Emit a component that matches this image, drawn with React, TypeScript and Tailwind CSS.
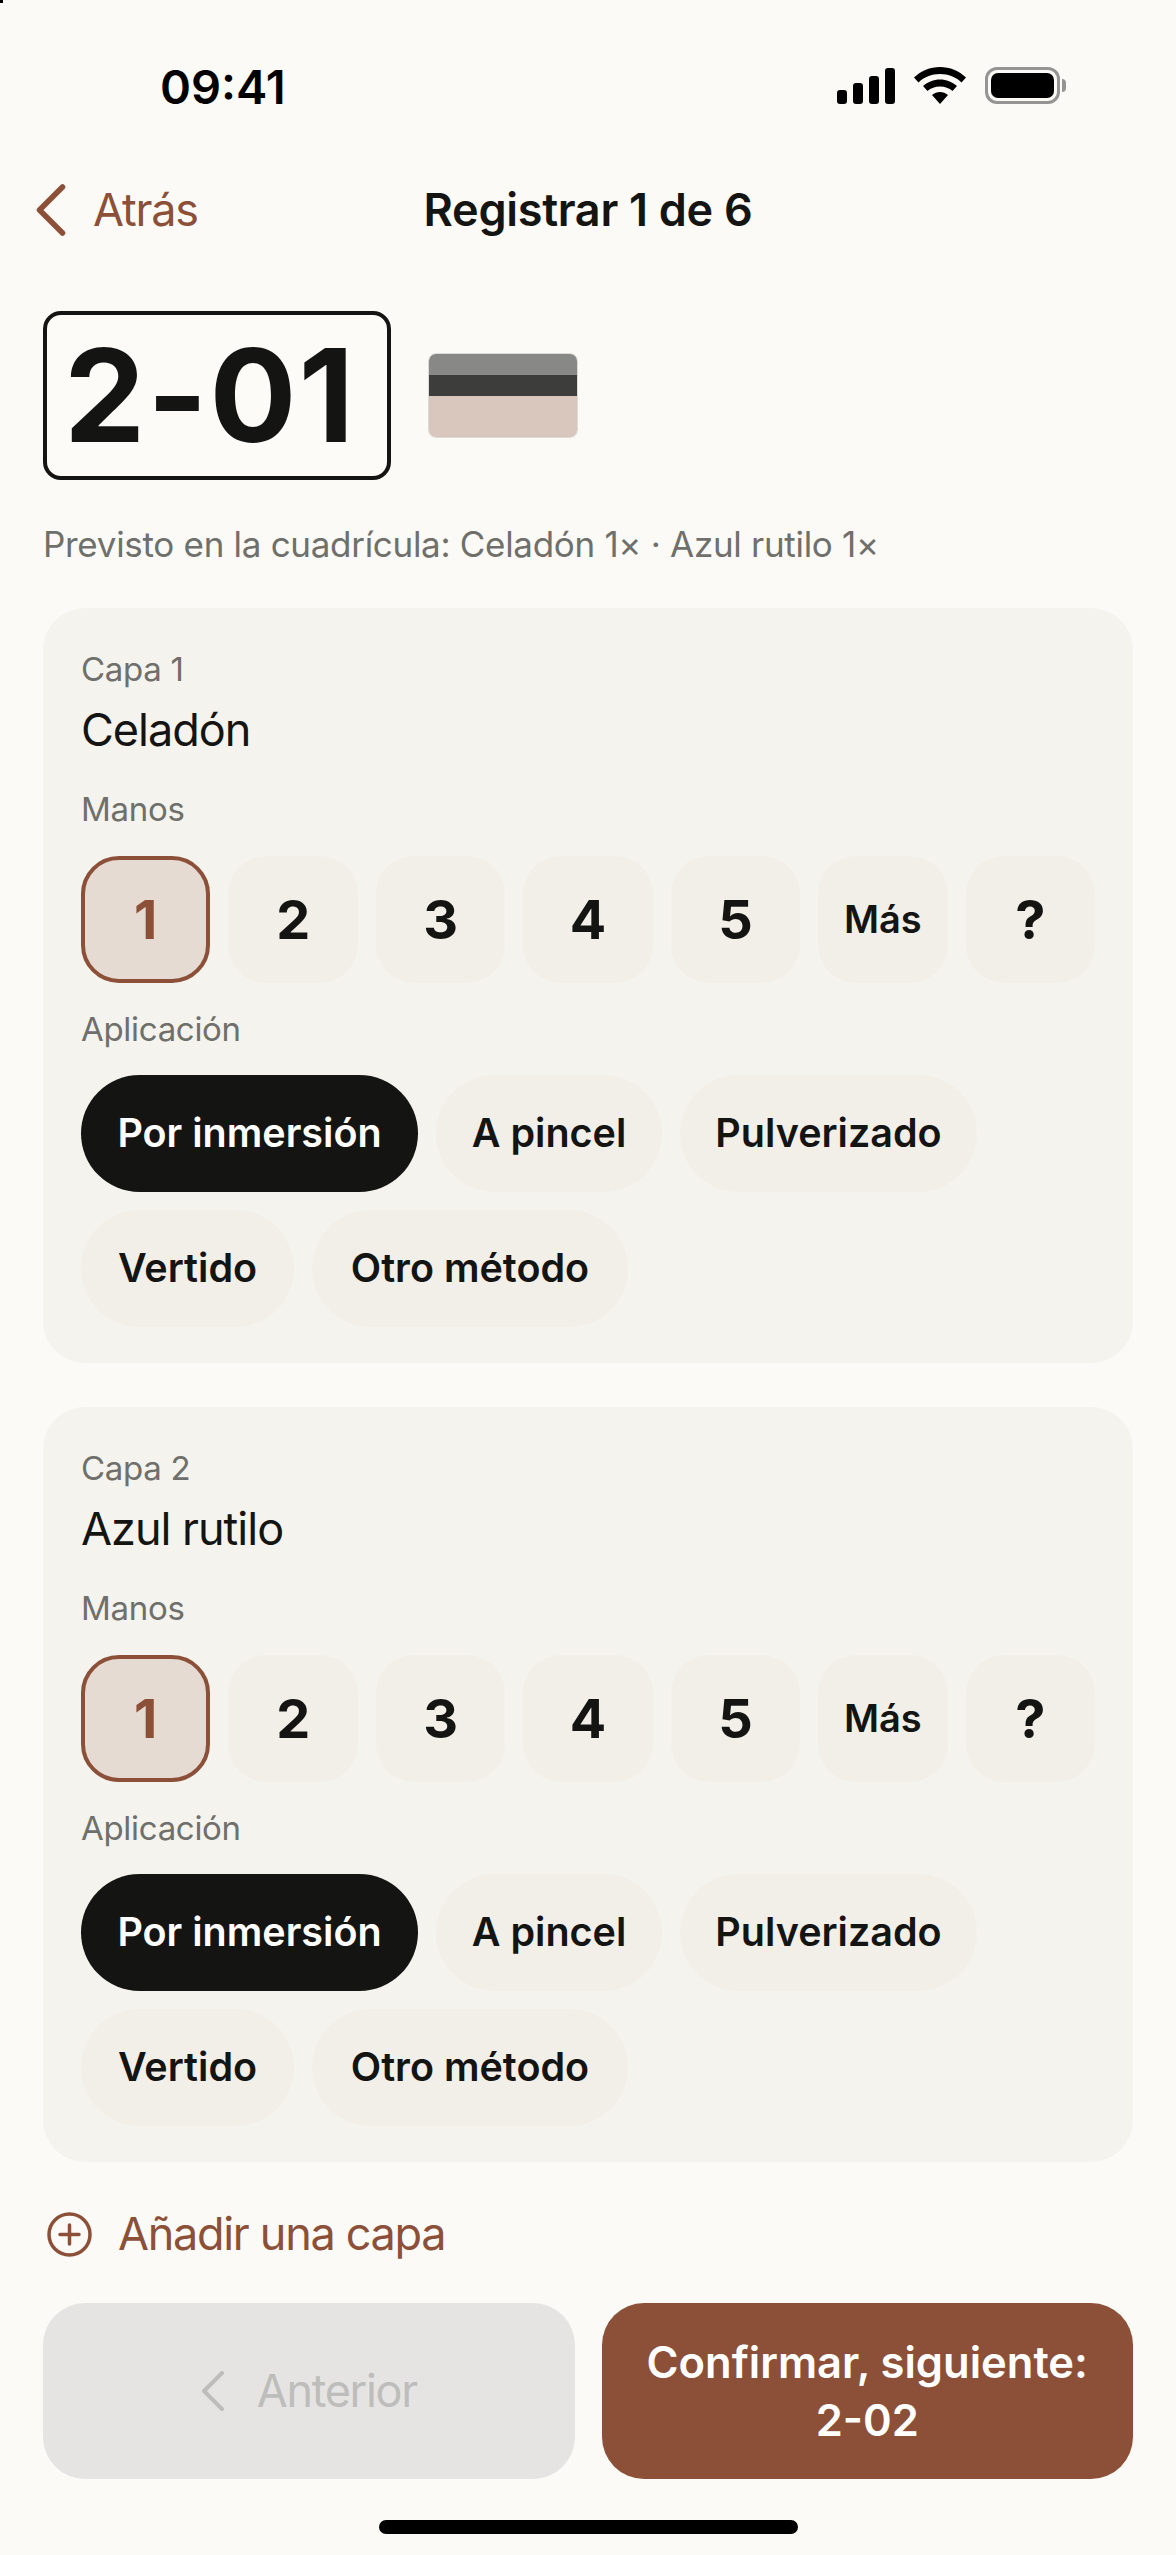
import React from "react";

const brown = "#8c5039";

function Layer({ n, name }: { n: number; name: string }) {
  const manos = ["1", "2", "3", "4", "5", "Más", "?"];
  const pills = [
    { label: "Por inmersión", cls: "w-[337px] bg-[#141412] text-white" },
    { label: "A pincel", cls: "w-[226px] bg-[#f2efe9] text-[#141412]" },
    { label: "Pulverizado", cls: "w-[297px] bg-[#f2efe9] text-[#141412]" },
    { label: "Vertido", cls: "w-[213px] bg-[#f2efe9] text-[#141412]" },
    { label: "Otro método", cls: "w-[316px] bg-[#f2efe9] text-[#141412]" },
  ];
  return (
    <section className="mx-[43px] h-[755px] rounded-[42px] bg-[#f4f3ee] px-[38px] pt-[41px]">
      <div className="text-[33px] leading-[40px] tracking-[-0.3px] text-[#6f6f6b]">Capa {n}</div>
      <div className="mt-[11px] text-[45px] leading-[60px] tracking-[-1px] text-[#141412]">{name}</div>
      <div className="mt-[29px] text-[33px] leading-[40px] tracking-[-0.3px] text-[#6f6f6b]">Manos</div>
      <div className="mt-[27px] grid grid-cols-7 gap-[18px]">
        {manos.map((m, i) => (
          <div
            key={m}
            className={
              i === 0
                ? "flex h-[127px] items-center justify-center rounded-[38px] border-4 border-[#8c5039] bg-[#e5dbd3] text-[54px] font-bold text-[#8c5039]"
                : m === "Más"
                ? "flex h-[127px] items-center justify-center rounded-[38px] bg-[#f2efe9] text-[38px] font-semibold text-[#141412]"
                : "flex h-[127px] items-center justify-center rounded-[38px] bg-[#f2efe9] text-[54px] font-bold text-[#141412]"
            }
          >
            {m}
          </div>
        ))}
      </div>
      <div className="mt-[26px] text-[33px] leading-[40px] tracking-[-0.3px] text-[#6f6f6b]">Aplicación</div>
      <div className="mt-[26px] flex flex-wrap gap-[18px]">
        {pills.map((p) => (
          <div
            key={p.label}
            className={`flex h-[117px] items-center justify-center rounded-full text-[39.5px] font-semibold ${p.cls}`}
          >
            {p.label}
          </div>
        ))}
      </div>
    </section>
  );
}

export default function App() {
  return (
    <div
      className="relative h-[2555px] w-[1176px] overflow-hidden bg-[#fbfaf6]"
      style={{ fontFamily: "Inter, 'Liberation Sans', sans-serif" }}
    >
      <div className="absolute left-0 top-0 h-[3px] w-[3px] bg-black" />

      {/* status bar */}
      <div className="flex h-[115px] items-end justify-between pl-[160px] pr-[110px]">
        <span className="text-[47px] font-semibold leading-[56px] text-black">09:41</span>
        <div className="mb-[11px] flex items-center gap-[19px]">
          <svg width="58" height="36" viewBox="0 0 58 36" fill="#000">
            <rect x="0" y="22" width="10" height="14" rx="3" />
            <rect x="16" y="15" width="10" height="21" rx="3" />
            <rect x="32" y="8" width="10" height="28" rx="3" />
            <rect x="48" y="0" width="10" height="36" rx="3" />
          </svg>
          <svg width="52" height="37" viewBox="0 0 52 37" fill="#000">
            <path d="M26 0C16 0 7 4 0 10.500L4.500 15.500C10 10 17.500 7 26 7C34.500 7 42 10 47.500 15.500L52 10.500C45 4 36 0 26 0Z" />
            <path d="M26 12.500C19.500 12.500 14 15 9 19L13.500 24C17 21 21 19.500 26 19.500C31 19.500 35 21 38.500 24L43 19C38 15 32.500 12.500 26 12.500Z" />
            <path d="M26 25C23 25 20.500 26 18 28L26 37L34 28C31.500 26 29 25 26 25Z" />
          </svg>
          <div className="flex items-center gap-[2px]">
            <div className="h-[37px] w-[75px] rounded-[12px] border-[3px] border-[#949492] p-[3px]">
              <div className="h-full w-full rounded-[7px] bg-black" />
            </div>
            <div className="h-[13px] w-[4px] rounded-r-full bg-[#949492]" />
          </div>
        </div>
      </div>

      {/* nav */}
      <div className="relative mt-[61px] flex h-[68px] items-center pl-[36px]">
        <svg width="30" height="52" viewBox="0 0 30 52" fill="none" stroke={brown} strokeWidth="5.500" strokeLinecap="round" strokeLinejoin="round">
          <path d="M26.500 3L3.500 26L26.500 49" />
        </svg>
        <span className="ml-[27px] text-[45px] leading-[60px] tracking-[-1.2px] text-[#8c5039]">Atrás</span>
        <span className="absolute inset-x-0 text-center text-[45px] font-semibold leading-[60px] tracking-[-0.3px] text-[#141412]">
          Registrar 1 de 6
        </span>
      </div>

      {/* code row */}
      <div className="mt-[67px] flex items-center gap-[37px] pl-[43px]">
        <div className="flex h-[169px] w-[348px] items-center justify-center rounded-[18px] border-4 border-[#141412] bg-[#fcfbf8] pr-[14px] text-[129px] font-bold leading-none tracking-[2px] text-[#141412]">
          2-01
        </div>
        <div className="h-[85px] w-[150px] overflow-hidden rounded-[8px] border border-[#0000001f]">
          <div className="h-[21px] bg-[#888886]" />
          <div className="h-[21px] bg-[#3d3d3b]" />
          <div className="h-[43px] bg-[#d9c7be]" />
        </div>
      </div>

      <div className="mt-[43px] pl-[43px] text-[35px] leading-[42px] tracking-[-0.3px] text-[#6f6f6b]">
        Previsto en la cuadrícula: Celadón 1× · Azul rutilo 1×
      </div>

      <div className="mt-[43px] flex flex-col gap-[44px]">
        <Layer n={1} name="Celadón" />
        <Layer n={2} name="Azul rutilo" />
      </div>

      {/* add */}
      <div className="mt-[42px] flex items-center gap-[26px] pl-[47px]">
        <svg width="45" height="45" viewBox="0 0 45 45" fill="none" stroke={brown} strokeWidth="3.500" strokeLinecap="round">
          <circle cx="22.500" cy="22.500" r="20.500" />
          <path d="M22.500 13V32M13 22.500H32" />
        </svg>
        <span className="text-[45px] leading-[60px] tracking-[-1.3px] text-[#8c5039]">Añadir una capa</span>
      </div>

      {/* actions */}
      <div className="mt-[39px] grid grid-cols-2 gap-[27px] px-[43px]">
        <div className="flex h-[176px] items-center justify-center gap-[32px] rounded-[42px] bg-[#e5e4e2] text-[45px] tracking-[-1.3px] text-[#bdbdbb]">
          <svg width="24" height="40" viewBox="0 0 24 40" fill="none" stroke="#bdbdbb" strokeWidth="4" strokeLinecap="round" strokeLinejoin="round">
            <path d="M21 2L3 20L21 38" />
          </svg>
          <span>Anterior</span>
        </div>
        <div className="flex h-[176px] items-center justify-center rounded-[42px] bg-[#8c5039] text-center text-[43.500px] font-semibold leading-[58px] text-white">
          <span>
            Confirmar, siguiente:
            <br />
            2-02
          </span>
        </div>
      </div>

      {/* home indicator */}
      <div className="mx-auto mt-[41px] h-[14px] w-[419px] rounded-full bg-black" />
    </div>
  );
}
